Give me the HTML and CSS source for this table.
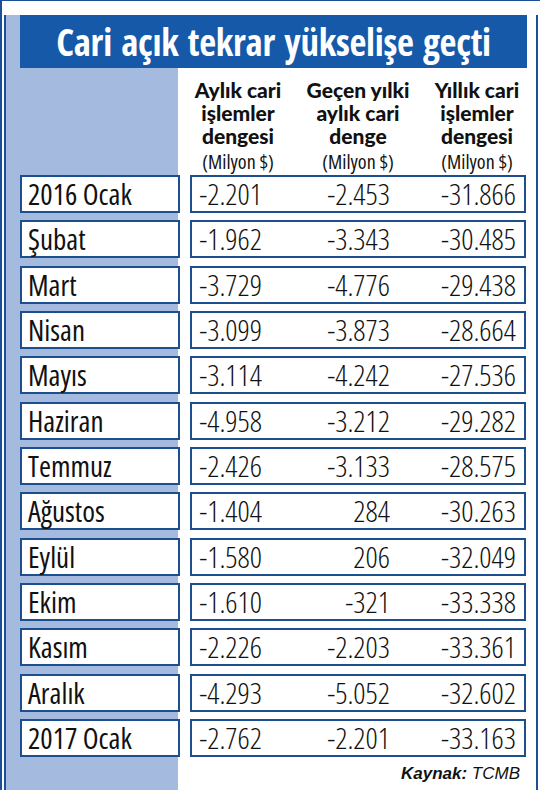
FILE: index.html
```html
<!DOCTYPE html>
<html lang="tr">
<head>
  <meta charset="UTF-8">
  <meta name="viewport" content="width=device-width, initial-scale=1.0">
  <title>Cari açık tekrar yükselişe geçti</title>
  <link rel="stylesheet" href="styles.css">
</head>
<body>

  <div class="frame">
    <div class="panel">
      <h1 class="title">Cari açık tekrar yükselişe geçti</h1>

      <!-- Column headers -->
      <div class="heads">
        <div class="head">Aylık cari<br>işlemler<br>dengesi<span class="unit">(Milyon $)</span></div>
        <div class="head">Geçen yılki<br>aylık cari<br>denge<span class="unit">(Milyon $)</span></div>
        <div class="head">Yıllık cari<br>işlemler<br>dengesi<span class="unit">(Milyon $)</span></div>
      </div>

      <div class="rows">
        <div class="row"><div class="label">2016 Ocak</div><div class="vals"><span>-2.201</span><span>-2.453</span><span>-31.866</span></div></div>
        <div class="row"><div class="label">Şubat</div><div class="vals"><span>-1.962</span><span>-3.343</span><span>-30.485</span></div></div>
        <div class="row"><div class="label">Mart</div><div class="vals"><span>-3.729</span><span>-4.776</span><span>-29.438</span></div></div>
        <div class="row"><div class="label">Nisan</div><div class="vals"><span>-3.099</span><span>-3.873</span><span>-28.664</span></div></div>
        <div class="row"><div class="label">Mayıs</div><div class="vals"><span>-3.114</span><span>-4.242</span><span>-27.536</span></div></div>
        <div class="row"><div class="label">Haziran</div><div class="vals"><span>-4.958</span><span>-3.212</span><span>-29.282</span></div></div>
        <div class="row"><div class="label">Temmuz</div><div class="vals"><span>-2.426</span><span>-3.133</span><span>-28.575</span></div></div>
        <div class="row"><div class="label">Ağustos</div><div class="vals"><span>-1.404</span><span>284</span><span>-30.263</span></div></div>
        <div class="row"><div class="label">Eylül</div><div class="vals"><span>-1.580</span><span>206</span><span>-32.049</span></div></div>
        <div class="row"><div class="label">Ekim</div><div class="vals"><span>-1.610</span><span>-321</span><span>-33.338</span></div></div>
        <div class="row"><div class="label">Kasım</div><div class="vals"><span>-2.226</span><span>-2.203</span><span>-33.361</span></div></div>
        <div class="row"><div class="label">Aralık</div><div class="vals"><span>-4.293</span><span>-5.052</span><span>-32.602</span></div></div>
        <div class="row"><div class="label">2017 Ocak</div><div class="vals"><span>-2.762</span><span>-2.201</span><span>-33.163</span></div></div>
      </div>

      <div class="source"><b>Kaynak:</b> TCMB</div>
    </div>
  </div>

</body>
</html>
```

FILE: styles.css
```css
body, html {
  margin: 0;
  padding: 0;
  background: #fff;
  font-family: "Open Sans", "DejaVu Sans", sans-serif;
}

/* Outer double frame */
.frame {
  width: 540px;
  height: 790px;
  box-sizing: border-box;
  border-top: 1px solid #1c4f96;
  border-left: 2px solid #1c4f96;
  padding: 3px 2px 0 2px;
}

/* Light blue column behind the month labels */
.panel {
  height: 785px;
  box-sizing: border-box;
  border-left: 2px solid #1c4f96;
  border-right: 2px solid #1c4f96;
  border-bottom: 2px solid #1c4f96;
  background: linear-gradient(to right, #a4bbdf 0, #a4bbdf 172px, #fff 172px);
}

.title {
  margin: 11px 0 0 14px;
  width: 507px;
  height: 53px;
  background: #1659a9;
  color: #fff;
  font-size: 37px;
  font-weight: 700;
  font-stretch: 75%;
  line-height: 53px;
  text-align: center;
  letter-spacing: -0.3px;
  word-spacing: 3px;
}

/* Column headers */
.heads {
  margin: 10px 0 0 184px;
  display: grid;
  grid-template-columns: 96px 144px 94px;
}

.head {
  text-align: center;
  font-family: Lato, "Open Sans", sans-serif;
  font-weight: 900;
  font-size: 21px;
  line-height: 23px;
  color: #111;
}

.unit {
  display: block;
  margin-top: 4px;
  font-family: "Open Sans", sans-serif;
  font-weight: 400;
  font-stretch: 75%;
  font-size: 20px;
  line-height: 22px;
}

/* Data rows */
.rows {
  margin: 2px 0 0 14px;
  display: flex;
  flex-direction: column;
  gap: 7.33px;
}

.row {
  display: grid;
  grid-template-columns: 160px 336px;
  column-gap: 10px;
  height: 38px;
}

.label, .vals {
  background: #fff;
  border: 2px solid #1d4e8e;
  box-sizing: border-box;
  height: 38px;
  line-height: 34px;
  color: #111;
  font-stretch: 75%;
  font-size: 29px;
}

.label {
  padding-left: 6px;
  font-weight: 500;
}

.vals {
  display: grid;
  grid-template-columns: 70px 128px 126px;
  padding-right: 8px;
  font-weight: 300;
  font-size: 30px;
  font-stretch: 78%;
}

.vals span {
  text-align: right;
}

.source {
  margin: 7px 16px 0 0;
  text-align: right;
  font-family: "Liberation Sans", Arial, sans-serif;
  font-style: italic;
  font-size: 17px;
  color: #111;
}
```
